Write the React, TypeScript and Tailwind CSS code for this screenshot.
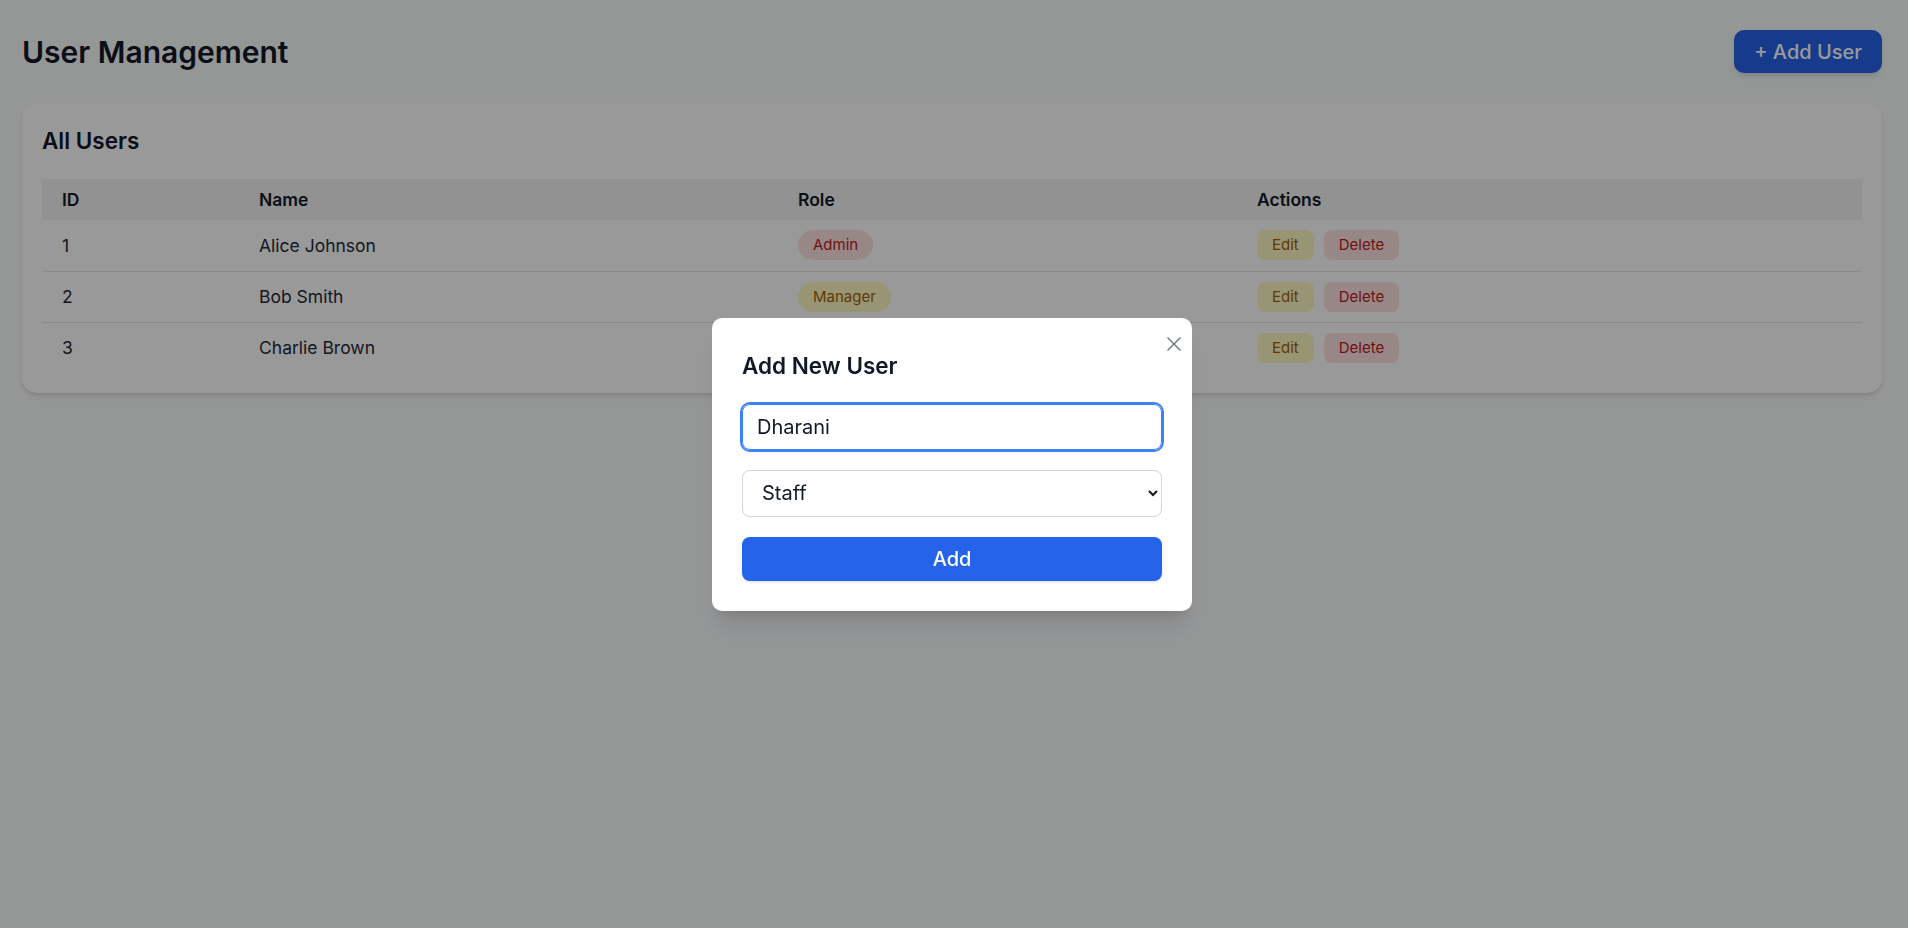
import { useState } from 'react';

type Role = 'Admin' | 'Manager' | 'Staff';

type User = {
  id: number;
  name: string;
  role: Role;
};

const initialUsers: User[] = [
  { id: 1, name: 'Alice Johnson', role: 'Admin' },
  { id: 2, name: 'Bob Smith', role: 'Manager' },
  { id: 3, name: 'Charlie Brown', role: 'Staff' },
];

const roleStyles: Record<Role, string> = {
  Admin: 'bg-[#fee2e2] text-[#b91c1c]',
  Manager: 'bg-[#fef9c3] text-[#a16207]',
  Staff: 'bg-[#dcfce7] text-[#15803d]',
};

const AddUserModal = ({ onClose }: { onClose: () => void }) => {
  const [name, setName] = useState('Dharani');
  const [role, setRole] = useState<Role>('Staff');

  return (
    <div className="fixed inset-0 bg-black/40 flex items-center justify-center pr-[4px]">
      <div className="relative w-[480px] bg-white rounded-[10px] shadow-xl p-[30px]">
        <button
          onClick={onClose}
          className="absolute top-[19px] right-[11px] text-[#6b7280]"
        >
          <svg width="14" height="14" viewBox="0 0 14 14" fill="none" stroke="currentColor" strokeWidth="1.4">
            <path d="M0.5 0.5 13.5 13.5M13.5 0.5 0.5 13.5" />
          </svg>
        </button>

        <h2 className="text-[22.5px] leading-[35px] font-semibold text-[#111827] mb-[21px]">
          Add New User
        </h2>

        <input
          value={name}
          onChange={(e) => setName(e.target.value)}
          className="block w-full h-[46px] px-[14px] border border-[#3b82f6] ring-2 ring-[#3b82f6] rounded-[8px] text-[20px] text-[#111827] outline-none"
        />

        <select
          value={role}
          onChange={(e) => setRole(e.target.value as Role)}
          className="block w-full h-[47px] mt-5 px-[15px] border border-[#d1d5db] rounded-[8px] bg-white text-[20px] text-[#111827]"
        >
          <option value="Admin">Admin</option>
          <option value="Manager">Manager</option>
          <option value="Staff">Staff</option>
        </select>

        <button className="block w-full h-[44px] mt-5 rounded-[8px] bg-[#2563eb] text-white text-[20px] font-medium shadow-sm">
          Add
        </button>
      </div>
    </div>
  );
};

export default function App() {
  const [users] = useState<User[]>(initialUsers);
  const [showModal, setShowModal] = useState(true);

  return (
    <div className="min-h-screen bg-[#f9fafb] pt-[30px] pl-[22px] pr-[26px] font-['Inter',sans-serif]">
      <div className="flex items-center justify-between h-[43px]">
        <h1 className="text-[30px] leading-[40px] font-semibold text-[#111827]">User Management</h1>
        <button
          onClick={() => setShowModal(true)}
          className="h-[43px] px-5 rounded-[10px] bg-[#2563eb] text-white text-[20px] leading-[30px] font-medium shadow-md"
        >
          + Add User
        </button>
      </div>

      <div className="mt-[30px] bg-white rounded-[15px] shadow-md p-5">
        <h2 className="text-[22.5px] leading-[35px] font-semibold text-[#111827] mb-[21px]">All Users</h2>

        <table className="w-full table-fixed text-[17.5px] leading-[25px]">
          <thead>
            <tr className="bg-[#f3f4f6] text-left text-[#111827]">
              <th className="w-[197px] h-[41px] px-5 font-semibold">ID</th>
              <th className="w-[539px] h-[41px] px-5 font-semibold">Name</th>
              <th className="w-[459px] h-[41px] px-5 font-semibold">Role</th>
              <th className="h-[41px] px-5 font-semibold">Actions</th>
            </tr>
          </thead>
          <tbody>
            {users.map((user) => (
              <tr key={user.id} className="border-b border-[#e5e7eb] last:border-b-0 text-[#1f2937]">
                <td className="h-[51px] px-5">{user.id}</td>
                <td className="h-[51px] px-5">{user.name}</td>
                <td className="h-[51px] px-5">
                  <span
                    className={`inline-block align-middle px-[15px] py-[5px] rounded-full text-[15px] leading-[20px] ${roleStyles[user.role]}`}
                  >
                    {user.role}
                  </span>
                </td>
                <td className="h-[51px] px-5">
                  <div className="flex gap-[10px]">
                    <button className="px-[15px] py-[5px] rounded-[8px] bg-[#fef9c3] text-[#a16207] text-[15px] leading-[20px]">
                      Edit
                    </button>
                    <button className="px-[15px] py-[5px] rounded-[8px] bg-[#fee2e2] text-[#b91c1c] text-[15px] leading-[20px]">
                      Delete
                    </button>
                  </div>
                </td>
              </tr>
            ))}
          </tbody>
        </table>
      </div>

      {showModal && <AddUserModal onClose={() => setShowModal(false)} />}
    </div>
  );
}
